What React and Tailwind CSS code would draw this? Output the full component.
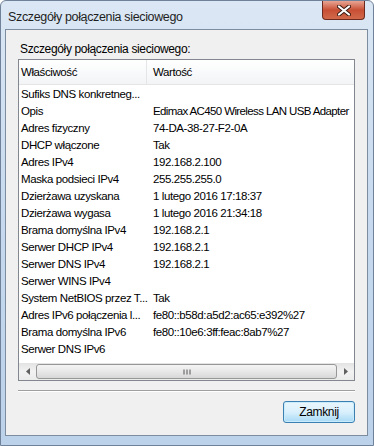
import React from 'react';

const rows = [
  ['Sufiks DNS konkretneg...', ''],
  ['Opis', 'Edimax AC450 Wireless LAN USB Adapter'],
  ['Adres fizyczny', '74-DA-38-27-F2-0A'],
  ['DHCP włączone', 'Tak'],
  ['Adres IPv4', '192.168.2.100'],
  ['Maska podsieci IPv4', '255.255.255.0'],
  ['Dzierżawa uzyskana', '1 lutego 2016 17:18:37'],
  ['Dzierżawa wygasa', '1 lutego 2016 21:34:18'],
  ['Brama domyślna IPv4', '192.168.2.1'],
  ['Serwer DHCP IPv4', '192.168.2.1'],
  ['Serwer DNS IPv4', '192.168.2.1'],
  ['Serwer WINS IPv4', ''],
  ['System NetBIOS przez T...', 'Tak'],
  ['Adres IPv6 połączenia l...', 'fe80::b58d:a5d2:ac65:e392%27'],
  ['Brama domyślna IPv6', 'fe80::10e6:3ff:feac:8ab7%27'],
  ['Serwer DNS IPv6', ''],
];

const font = { fontFamily: '"Liberation Sans", Arial, sans-serif' };

const App = () => {
  return (
    <div
      className="w-[374px] h-[446px] flex flex-col bg-gradient-to-b from-[#dbe7f4] via-[#c6d9ee] to-[#bcd2ea] border border-[#6f8299] rounded-t-[6px] overflow-hidden text-[11.5px] text-black tracking-[-0.4px]"
      style={font}
    >
      {/* title bar */}
      <div className="h-[28px] flex justify-between items-start shrink-0">
        <span className="pl-[7px] pt-[7px] text-[12.5px] tracking-[-0.35px] text-[#1e1e1e]">Szczegóły połączenia sieciowego</span>
        <div className="mr-[8px] w-[43px] h-[19px] rounded-b-[4px] border border-t-0 border-[#6b2a1d] bg-gradient-to-b from-[#e8a493] via-[#c74f34] to-[#d1694a] flex items-center justify-center">
          <svg width="14" height="11" viewBox="0 0 14 11">
            <path d="M2 1.5 L12 9.5 M12 1.5 L2 9.5" stroke="#3a1a12" strokeWidth="4" strokeLinecap="round" />
            <path d="M2 1.5 L12 9.5 M12 1.5 L2 9.5" stroke="#ffffff" strokeWidth="2.2" strokeLinecap="round" />
          </svg>
        </div>
      </div>

      {/* client area */}
      <div className="ml-[4px] mr-[5px] h-[407px] bg-[#f0f0f0] border border-[#7d8da0] flex flex-col px-[12px] pt-[11px]">
        <div className="h-[16px] leading-[16px] pl-[2px] text-[12px] tracking-[-0.35px]">Szczegóły połączenia sieciowego:</div>

        {/* list box */}
        <div className="mt-[2px] h-[322px] border border-[#828790] bg-white flex flex-col">
          <div className="h-[25px] flex items-stretch bg-gradient-to-b from-white to-[#f3f4f6] border-b border-[#e5e5e5] shrink-0">
            <div className="w-[128px] pl-[2px] pt-[2px] flex items-center border-r border-[#e3e5e8]">Właściwość</div>
            <div className="pl-[6px] pt-[2px] flex items-center">Wartość</div>
          </div>
          <div className="flex-1 pt-[1px] overflow-hidden">
            {rows.map(([k, v]) => (
              <div key={k} className="h-[17px] flex items-center whitespace-nowrap">
                <span className="w-[134px] pl-[2px] shrink-0">{k}</span>
                <span className={v.length > 30 ? 'tracking-[-0.62px]' : ''}>{v}</span>
              </div>
            ))}
          </div>
          {/* horizontal scrollbar */}
          <div className="h-[17px] shrink-0 flex items-center bg-gradient-to-b from-[#e3e3e3] via-[#f2f2f2] to-[#ebebeb]">
            <div className="w-[17px] flex justify-center">
              <svg width="4" height="7" viewBox="0 0 4 7"><path d="M4 0 L0 3.5 L4 7Z" fill="#606060" /></svg>
            </div>
            <div className="flex-1 h-[15px] rounded-[3px] border border-[#979797] bg-gradient-to-b from-[#f4f4f4] via-[#e8e8e8] to-[#d8d8d8] flex items-center justify-center">
              <svg width="8" height="6" viewBox="0 0 8 6">
                <path d="M1 0.5 V5.5 M4 0.5 V5.5 M7 0.5 V5.5" stroke="#555" strokeWidth="1" />
              </svg>
            </div>
            <div className="w-[17px] flex justify-center">
              <svg width="4" height="7" viewBox="0 0 4 7"><path d="M0 0 L4 3.5 L0 7Z" fill="#606060" /></svg>
            </div>
          </div>
        </div>

        {/* separator */}
        <div className="mt-[9px] border-t border-[#a0a0a0] border-b border-b-white" />

        <div className="mt-[9px] flex justify-end">
          <button className="w-[72px] h-[22px] rounded-[3px] border border-[#3c7fb1] bg-gradient-to-b from-[#eaf6fd] via-[#d9f0fc] to-[#a7d9f5] text-[12px] tracking-[-0.35px] shadow-[inset_0_0_0_1px_#c8ecfb]">
            Zamknij
          </button>
        </div>
      </div>
      <div className="flex-1" />
    </div>
  );
};

export default App;
